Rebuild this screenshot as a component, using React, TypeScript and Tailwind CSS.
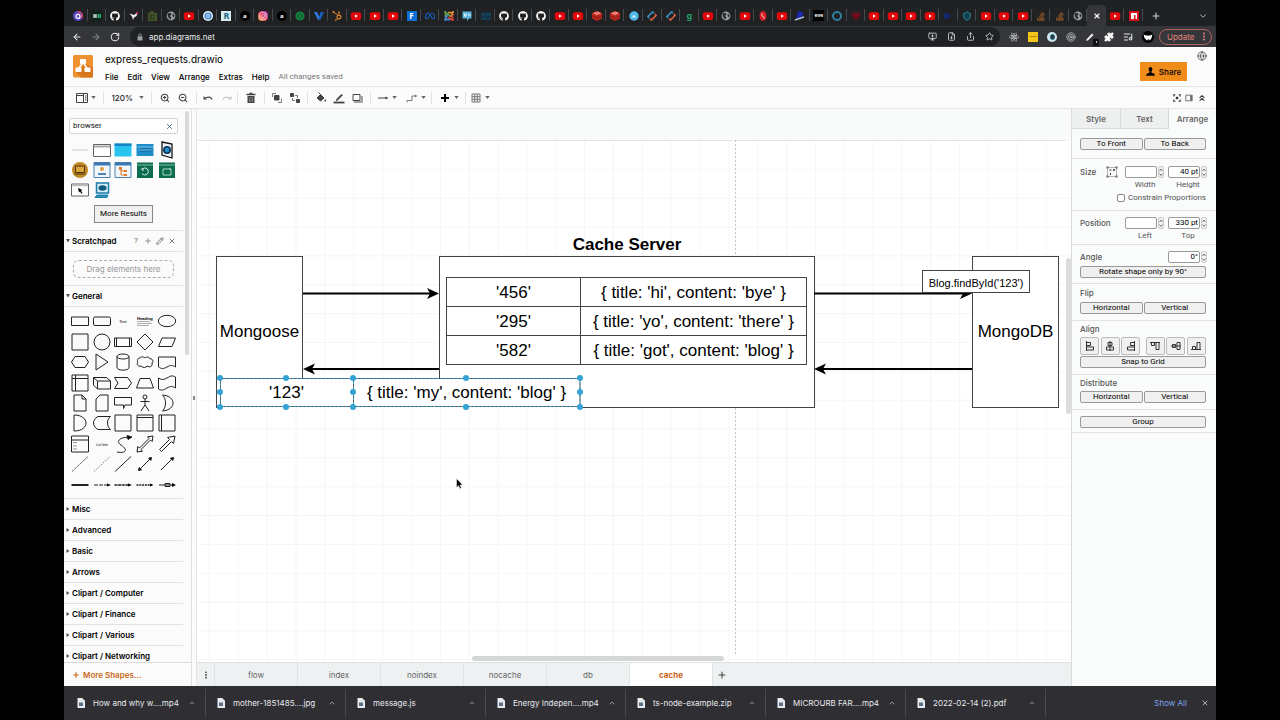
import type { ReactNode } from 'react';
import { FaGithub, FaHubspot, FaInstagram, FaMeta, FaReact, FaStackOverflow } from 'react-icons/fa6';
import {
  ArrowLeft, ArrowRight, ChevronDown, ChevronsUp, ChevronUp, FileDown, Globe, Heart, ListMusic, MonitorDown,
  Pencil, Plus, Puzzle, RotateCw, Share, Shield, Star, Target, X, ZoomIn, ZoomOut,
} from 'lucide-react';

const ui = "font-['Inter','Liberation_Sans',sans-serif]";
const small = "font-['Roboto','Liberation_Sans',sans-serif]";
const helv = "font-['Liberation_Sans',Arial,sans-serif]";

/* ---------- favicons ---------- */

function YouTube() {
  return (
    <svg viewBox="0 0 12 12" className="h-3 w-3">
      <rect x="0.8" y="2.2" width="10.4" height="7.8" rx="2" fill="#e3060b" />
      <path d="M5 4.5 8 6.1 5 7.7Z" fill="#fff" />
    </svg>
  );
}

function World() {
  return (
    <svg viewBox="0 0 12 12" className="h-3 w-3">
      <circle cx="6" cy="6" r="4.4" fill="#9aa0a6" />
      <path d="M3 3.2 6 3l.6 1.6L4.8 6l1.6 1.2L5.600 9.600 4 8.200 2.600 6ZM8 3.400l1.600 2L9 7.600 7.400 6Z" fill="#27292c" />
    </svg>
  );
}

function Redis() {
  return (
    <svg viewBox="0 0 12 12" className="h-3 w-3">
      <path d="m6 1 5 2.300v5.200L6 11 1 8.500V3.300Z" fill="#b5271f" />
      <path d="m6 1 5 2.300L6 5.600 1 3.300Z" fill="#dd3f35" />
      <path d="M1 5.800 6 8.200l5-2.400" fill="none" stroke="#7c1610" strokeWidth=".7" />
      <path d="M3.500 3.200h2M6.500 2.500l2 1M5.500 4.500l1-.5" stroke="#fff" strokeWidth=".9" />
    </svg>
  );
}

function Letter({ text, className }: { text: string; className: string }) {
  return <span className={`flex h-[10px] w-[10px] items-center justify-center leading-none font-bold ${className}`}>{text}</span>;
}

function Ring() {
  return (
    <svg viewBox="0 0 12 12" className="h-3 w-3" fill="none" strokeWidth="1.6">
      <path d="M3 8 2 6.500 6.500 2 8 3" stroke="#3d93c8" />
      <path d="m9 4 1 1.500L5.500 10 4 9" stroke="#e0614a" />
    </svg>
  );
}

const yt = <YouTube />;
const gh = <FaGithub className="h-[10px] w-[10px] text-white" />;

const tabs: { title: string; icon: ReactNode; active?: boolean }[] = [
  { title: 'Mail', icon: <svg viewBox="0 0 12 12" className="h-3 w-3"><circle cx="6" cy="6" r="5" fill="#5a49c8" /><path d="M6 3h3v6a4 4 0 0 0 2-3 5 5 0 0 0-5-5Z" fill="#d8405e" /><circle cx="6" cy="6.4" r="2" fill="none" stroke="#fff" strokeWidth="1.2" /></svg> },
  { title: 'Hired', icon: <svg viewBox="0 0 12 12" className="h-3 w-3"><rect x="1" y="1" width="10" height="10" rx="1" fill="#10201a" /><path d="M3 4v4M5 4v4M3 6h2" stroke="#e8f5ee" strokeWidth="1.2" /><path d="M7.4 4v4M9.2 4v4" stroke="#2bc07a" strokeWidth="1.3" /></svg> },
  { title: 'GitHub', icon: gh },
  { title: 'Bird', icon: <svg viewBox="0 0 12 12" className="h-3 w-3"><path d="M1.5 3.5 6 5l4-3-1.5 4L6 7.5 5 10 4 6.5Z" fill="#f3f0fa" /><path d="m8 2 2.5-.5L9 5Z" fill="#b9264f" /></svg> },
  { title: 'Notes', icon: <svg viewBox="0 0 12 12" className="h-3 w-3"><path d="M2 3h2V1.500h4V3h3v8H2Z" fill="#46592a" /><path d="M3 5h6M3 7h3M7 7h2M3 9h6" stroke="#1f2a12" /></svg> },
  { title: 'Page', icon: <World /> },
  { title: 'Video', icon: yt },
  { title: 'Docs', icon: <svg viewBox="0 0 12 12" className="h-3 w-3"><circle cx="6" cy="6" r="5" fill="#e5f0fb" /><circle cx="6" cy="6" r="3" fill="#8fb9e6" stroke="#3d83d0" strokeWidth="1.2" /></svg> },
  { title: 'Research', icon: <Letter text="R" className="bg-[#d9eef2] text-[9px] text-[#1a6b80]" /> },
  { title: 'A', icon: <Letter text="a" className="rounded-full bg-black text-[6px] text-white" /> },
  { title: 'Instagram', icon: <span className="flex h-[10px] w-[10px] items-center justify-center rounded-sm bg-linear-to-tr from-[#f9a13b] via-[#e0365f] to-[#a637c4]"><FaInstagram className="h-2 w-2 text-white" /></span> },
  { title: 'A', icon: <Letter text="a" className="rounded-full bg-black text-[6px] text-white" /> },
  { title: 'Green', icon: <svg viewBox="0 0 12 12" className="h-3 w-3"><circle cx="6" cy="6" r="4.6" fill="#15803f" /><circle cx="6" cy="6" r="2.2" fill="none" stroke="#0e5c2d" /></svg> },
  { title: 'V', icon: <svg viewBox="0 0 12 12" className="h-3 w-3"><path d="M1 2h3l2.5 6L5.5 10.500Z" fill="#2f7fe8" /><path d="M7.500 2H11L7 10.500 5.600 8Z" fill="#1b5cc0" /></svg> },
  { title: 'HubSpot', icon: <FaHubspot className="h-[10px] w-[10px] text-[#e28a2c]" /> },
  { title: 'Video', icon: yt }, { title: 'Video', icon: yt }, { title: 'Video', icon: yt },
  { title: 'F', icon: <Letter text="F" className="bg-[#0a6fd6] text-[8px] text-white" /> },
  { title: 'Meta', icon: <FaMeta className="h-[10px] w-[10px] text-[#1462c9]" /> },
  { title: 'Joomla', icon: <svg viewBox="0 0 12 12" className="h-3 w-3" fill="none" strokeWidth="1.600"><path d="M2.500 7V4.500l2-1L7 6" stroke="#6aa84f" /><path d="M5 2.500h2.500l2 2L7 7" stroke="#e8932f" /><path d="M9.500 5v3l-2 1.500L5 7" stroke="#d9453a" /><path d="M7 9.800H4.500l-2-2.300L5 5" stroke="#4a8fd0" /><circle cx="2.300" cy="2.300" r="1.200" fill="#6aa84f" /><circle cx="9.800" cy="2.300" r="1.200" fill="#e8932f" /><circle cx="2.300" cy="9.800" r="1.200" fill="#4a8fd0" /><circle cx="9.800" cy="9.800" r="1.200" fill="#d9453a" /></svg> },
  { title: 'Chat', icon: <svg viewBox="0 0 12 12" className="h-3 w-3"><path d="M1.500 1.500h9v7H8L6 11V8.500H1.500Z" fill="#5fb4dd" /><path d="m3 3.500 1.300 3 1.300-3M7 5h2.500" stroke="#fff" fill="none" /></svg> },
  { title: 'Photo', icon: <svg viewBox="0 0 12 12" className="h-3 w-3"><rect x="1" y="2.500" width="10" height="7.500" fill="#163c56" /><path d="m2 8.500 2.500-3L7 8l1.500-1.500 2 2" fill="none" stroke="#0d2434" /></svg> },
  { title: 'GitHub', icon: gh }, { title: 'GitHub', icon: gh }, { title: 'GitHub', icon: gh },
  { title: 'Video', icon: yt }, { title: 'Video', icon: yt },
  { title: 'Redis', icon: <Redis /> }, { title: 'Redis', icon: <Redis /> },
  { title: 'Blue', icon: <svg viewBox="0 0 12 12" className="h-3 w-3"><circle cx="6" cy="6" r="4.700" fill="#4db8e8" /><path d="m3.500 7.500 2.500-3 2.500 3Z" fill="#c9ebfa" /></svg> },
  { title: 'Sync', icon: <Ring /> }, { title: 'Sync', icon: <Ring /> },
  { title: 'G', icon: <Letter text="g" className="text-[9px] text-[#22a06b]" /> },
  { title: 'Video', icon: yt },
  { title: 'Page', icon: <World /> },
  { title: 'Video', icon: yt },
  { title: 'Red', icon: <svg viewBox="0 0 12 12" className="h-3 w-3"><ellipse cx="6" cy="6" rx="3.500" ry="5" fill="#d81c24" /><path d="M5 3v3l2 1v2" stroke="#f6b8b8" fill="none" /></svg> },
  { title: 'Video', icon: yt },
  { title: 'Plane', icon: <svg viewBox="0 0 12 12" className="h-3 w-3"><path d="m4 1 5 1v6L2 9Z" fill="#1c2aa8" /><path d="m1 10 9-3" stroke="#b8bcc4" strokeWidth="1.500" /></svg> },
  { title: 'Eve', icon: <span className="flex h-[11px] w-[11px] items-center justify-center bg-black text-[5px] font-bold text-white">eve</span> },
  { title: 'Circle', icon: <span className="h-[10px] w-[10px] rounded-full border-2 border-[#2f7f9f]" /> },
  { title: 'Heart', icon: <Heart className="h-[10px] w-[10px] fill-[#6a0f22] text-[#6a0f22]" /> },
  { title: 'Video', icon: yt }, { title: 'Video', icon: yt }, { title: 'Video', icon: yt }, { title: 'Video', icon: yt },
  { title: 'Flag', icon: <svg viewBox="0 0 12 12" className="h-3 w-3"><path d="m2 4 3-1 5 3-5 3-3-1Z" fill="#14286e" /></svg> },
  { title: 'Shield', icon: <Shield className="h-[10px] w-[10px] fill-[#12414d] text-[#2c93ad]" /> },
  { title: 'Video', icon: yt }, { title: 'Video', icon: yt }, { title: 'Video', icon: yt },
  { title: 'Stack Overflow', icon: <FaStackOverflow className="h-[10px] w-[10px] text-[#a8642a]" /> },
  { title: 'Stack Overflow', icon: <FaStackOverflow className="h-[10px] w-[10px] text-[#a8642a]" /> },
  { title: 'Page', icon: <World /> },
  { title: 'Close tab', icon: <X className="h-2 w-2 stroke-[3.5] text-white" />, active: true },
  { title: 'Video', icon: yt },
  { title: 'npm', icon: <svg viewBox="0 0 12 12" className="h-3 w-3"><rect x="1" y="1" width="10" height="10" fill="#d5111c" /><path d="M3 3h6v6H7.500V5H6v4H3Z" fill="#fff" /></svg> },
];

function BrowserChrome() {
  return (
    <div className="shrink-0 bg-[#1f2123]">
      <div className="flex h-[26px] items-end pl-[5px]">
        <div className="flex h-[21px] min-w-0 flex-1">
          {tabs.map((tab, i) => (
            <button
              key={i}
              aria-label={tab.title}
              className={`relative flex min-w-0 flex-1 items-center justify-center ${tab.active ? 'rounded-t bg-[#35363a]' : ''}`}
            >
              {tab.icon}
              {!tab.active && <span className="absolute top-1 right-0 h-3 w-px bg-[#45484c]" />}
            </button>
          ))}
        </div>
        <div className="flex h-[21px] w-[73px] items-center justify-between px-2 text-[#d0d3d6]">
          <button aria-label="New tab"><Plus className="h-[10px] w-[10px] stroke-[2.500]" /></button>
          <button aria-label="Search tabs"><ChevronDown className="h-[10px] w-[10px]" /></button>
        </div>
      </div>
      <div className="flex h-[21px] items-center bg-[#35363a] pl-2 text-[#e2e4e7]">
        <div className="flex w-[58px] items-center gap-[9px]">
          <button aria-label="Back"><ArrowLeft className="h-[10px] w-[10px] stroke-[2.500]" /></button>
          <button aria-label="Forward"><ArrowRight className="h-[10px] w-[10px] stroke-[2.500] text-[#85888c]" /></button>
          <button aria-label="Reload"><RotateCw className="h-[10px] w-[10px] stroke-[2.500]" /></button>
        </div>
        <div className="flex h-[19px] min-w-0 flex-1 items-center rounded-full bg-[#1f2123] pr-[6px] pl-[6px]">
          <svg viewBox="0 0 8 8" className="h-2 w-2" fill="#9a9da1"><rect x="1.500" y="3.300" width="5" height="4.200" rx=".6" /><path d="M2.700 3.500V2.300a1.300 1.300 0 0 1 2.600 0v1.200" fill="none" stroke="#9a9da1" strokeWidth=".9" /></svg>
          <input aria-label="Address" defaultValue="app.diagrams.net" className={`ml-[5px] min-w-0 flex-1 bg-transparent text-[8px] text-[#e8eaed] outline-none ${ui}`} />
          <div className="flex gap-[10px]">
            <MonitorDown className="h-[9px] w-[9px]" />
            <FileDown className="h-[9px] w-[9px]" />
            <Share className="h-[9px] w-[9px]" />
            <Star className="h-[9px] w-[9px]" />
          </div>
        </div>
        <div className="flex items-center gap-[9px] pr-1 pl-[9px]">
          <FaReact className="h-[10px] w-[10px]" />
          <span className="flex h-[10px] w-[10px] items-center justify-center bg-[#f5c518]"><span className="h-px w-[7px] bg-[#a8830a]" /></span>
          <span className="flex h-[10px] w-[10px] items-center justify-center rounded-full bg-[#cfe8ef]"><span className="h-[6px] w-[5px] rounded-full border border-[#1d6f88] bg-[#35363a]" /></span>
          <Target className="h-[10px] w-[10px] text-[#b9bcc0]" />
          <span className="relative">
            <svg viewBox="0 0 10 10" className="h-[10px] w-[10px]"><path d="m1 9 .8-2L7 1.500 8.500 3 3.200 8.200Z" fill="#f1f1f1" /></svg>
            <span className="absolute -right-1 -bottom-1 flex h-[7px] w-[6px] items-center justify-center bg-[#111]"><span className="h-[2px] w-px bg-[#bbb]" /></span>
          </span>
          <Puzzle className="h-[10px] w-[10px] fill-white text-white" />
          <ListMusic className="h-[10px] w-[10px] stroke-[2.500]" />
          <svg viewBox="0 0 12 12" className="h-3 w-3">
            <circle cx="6" cy="6" r="6" fill="#000" />
            <path d="M1.500 3.500 4 4.500h4l2.500-1L9.500 7 8 9.500 6.500 8 5 9.500 2.500 7Z" fill="#fff" />
          </svg>
          <button className={`-ml-1 flex h-4 w-[53px] items-center justify-between rounded-full border border-[#b3655f] pr-[6px] pl-[7px] text-[8px] text-[#e2837b] ${ui}`}>
            Update
            <svg viewBox="0 0 2 9" className="h-[9px] w-[2px]" fill="currentColor"><circle cx="1" cy="1.500" r="1" /><circle cx="1" cy="4.500" r="1" /><circle cx="1" cy="7.500" r="1" /></svg>
          </button>
        </div>
      </div>
    </div>
  );
}

/* ---------- header and toolbar ---------- */

function Header() {
  return (
    <header className="flex h-[39px] shrink-0 items-start bg-[#fbfbfb] pl-[9px]">
      <svg viewBox="0 0 20 23" className="mt-2 h-[23px] w-5">
        <rect width="20" height="22.500" rx="1.500" fill="#ee9130" />
        <path d="M20 13v8.500a1 1 0 0 1-1 1H8L3 17l10-8Z" fill="#d9771f" />
        <path d="m9.500 8-4 6m5-6 4 6" stroke="#fff" strokeWidth="1.500" />
        <rect x="7" y="4" width="6" height="5" rx="0.800" fill="#fff" />
        <rect x="2.500" y="12.500" width="6" height="4.500" rx="0.800" fill="#fff" />
        <rect x="11.500" y="12.500" width="6" height="4.500" rx="0.800" fill="#fff" />
      </svg>
      <div className="mt-[5px] ml-3 flex-1">
        <h1 className={`text-[10px] leading-[15px] text-black ${ui}`}>express_requests.drawio</h1>
        <nav className={`mt-1 flex gap-[9px] text-[8px] leading-3 font-medium text-black ${ui}`}>
          {['File', 'Edit', 'View', 'Arrange', 'Extras', 'Help'].map((item) => (
            <button key={item}>{item}</button>
          ))}
          <span className={`text-[8px] font-normal text-[#777] ${small}`}>All changes saved</span>
        </nav>
      </div>
      <button className={`mt-[15px] flex h-[19px] w-[47px] items-center justify-center gap-1 bg-[#f08c1a] text-[8px] font-semibold text-black/90 ${ui}`}>
        <svg viewBox="0 0 10 10" className="h-[9px] w-[9px] text-black" fill="currentColor">
          <path d="M5 0C3.600 0 2.800 1.200 3 2.700c.1 1 .6 1.900 1 2.300v1L1 7.500Q.2 8 .2 9.800h9.600Q9.800 8 9 7.500L6 6V5c.4-.4.9-1.300 1-2.300C7.200 1.200 6.400 0 5 0Z" />
        </svg>
        Share
      </button>
      <button aria-label="Language" className="mt-1 mr-[9px] ml-[10px]"><Globe className="h-[10px] w-[10px] text-[#555]" /></button>
    </header>
  );
}

function Caret() {
  return <svg viewBox="0 0 6 4" className="h-[3px] w-[5px]" fill="#666"><path d="M0 0h6L3 4Z" /></svg>;
}

function ToolGroup({ className, children }: { className: string; children: ReactNode }) {
  return <div className={`flex h-3 items-center justify-center border-r border-[#e2e2e2] ${className}`}>{children}</div>;
}

function Tool({ label, children }: { label: string; children: ReactNode }) {
  return <button aria-label={label} className="flex items-center gap-[3px] text-[#444]">{children}</button>;
}

function Svg({ children }: { children: ReactNode }) {
  return <svg viewBox="0 0 12 12" className="h-3 w-3" fill="none" stroke="currentColor">{children}</svg>;
}

function Toolbar() {
  return (
    <div className="flex h-[23px] shrink-0 items-center border-y border-[#e4e4e4] bg-[#fbfbfb]">
      <ToolGroup className="w-10 pl-1">
        <Tool label="Format view">
          <Svg><path d="M.5 1.500h11v9H.5ZM7.500 1.500v9M.5 3.500h7M9 4h1.500M9 6h1.500M9 8h1.500" /></Svg>
          <Caret />
        </Tool>
      </ToolGroup>
      <ToolGroup className="w-12 gap-[5px]">
        <select aria-label="Zoom" className={`appearance-none bg-transparent text-[8px] font-medium text-[#222] outline-none ${ui}`}>
          <option>120%</option>
        </select>
        <Caret />
      </ToolGroup>
      <ToolGroup className="w-[45px] gap-2">
        <Tool label="Zoom in"><ZoomIn className="h-[10px] w-[10px] stroke-[2.500]" /></Tool>
        <Tool label="Zoom out"><ZoomOut className="h-[10px] w-[10px] stroke-[2.500]" /></Tool>
      </ToolGroup>
      <ToolGroup className="w-[41px] gap-[7px]">
        <Tool label="Undo"><Svg><path d="M3 6.500c2-2 6-2 7 1" strokeWidth="1.200" /><path d="M1.500 4v3.500H5Z" fill="currentColor" stroke="none" /></Svg></Tool>
        <Tool label="Redo"><span className="text-[#c4c4c4]"><Svg><path d="M9 6.500c-2-2-6-2-7 1" strokeWidth="1.200" /><path d="M10.500 4v3.500H7Z" fill="currentColor" stroke="none" /></Svg></span></Tool>
      </ToolGroup>
      <ToolGroup className="w-[27px]">
        <Tool label="Delete"><Svg><path d="M2.500 4h7v7h-7Z" fill="currentColor" stroke="none" /><path d="M1.500 2.500h9M4.500 1.500h3" strokeWidth="1.300" /><path d="M4.500 5v5M6 5v5M7.500 5v5" stroke="#aaa" strokeWidth=".5" /></Svg></Tool>
      </ToolGroup>
      <ToolGroup className="w-[43px] gap-[6px]">
        <Tool label="To front"><Svg><path d="M3.500 3.500h4.500v4.500h-4.500Z" fill="currentColor" /><path d="M1.500 5V1.500H5M7 10.500h3.500V7" stroke="#777" /></Svg></Tool>
        <Tool label="To back"><Svg><path d="M1.500 1.500h3v3h-3ZM7.500 7.500h3v3h-3Z" fill="currentColor" /><path d="M6 3.500h2.500V6M3.500 6v2.500H6" stroke="#777" /></Svg></Tool>
      </ToolGroup>
      <ToolGroup className="w-[63px] gap-[6px]">
        <Tool label="Fill colour"><Svg><path d="m5.500 2.500 3.500 3.500-3.500 3L2 6Z" fill="currentColor" /><path d="M3.500.5 6 3" /><circle cx="10.300" cy="8.500" r=".9" fill="currentColor" stroke="none" /></Svg></Tool>
        <Tool label="Line colour"><Svg><path d="M3 7.500 8.500 2l1.300 1.300-5.500 5.500H3Z" fill="currentColor" stroke="none" /><path d="M.5 10.500h11" strokeWidth="1.800" /></Svg></Tool>
        <Tool label="Shadow"><Svg><path d="M2 2.500h7v6H2Z" /><path d="M3 10h8V4" strokeWidth="1.500" stroke="#888" /></Svg></Tool>
      </ToolGroup>
      <ToolGroup className="w-[61px] gap-[9px]">
        <Tool label="Connection"><Svg><path d="M1 6h8" /><path d="M8.500 4.500v3l3-1.500Z" fill="currentColor" stroke="none" /></Svg><Caret /></Tool>
        <Tool label="Waypoints"><Svg><path d="M1 10.500V8.500h5V4h4" stroke="#777" /><path d="M9 2.500v3l2.500-1.500Z" fill="#777" stroke="none" /></Svg><Caret /></Tool>
      </ToolGroup>
      <ToolGroup className="w-[34px]">
        <Tool label="Insert"><Svg><path d="M6 2v8M2 6h8" strokeWidth="2" stroke="#000" /></Svg><Caret /></Tool>
      </ToolGroup>
      <div className="flex flex-1 items-center pl-1">
        <Tool label="Table"><Svg><path d="M2 2h8v8H2ZM2 4.700h8M2 7.300h8M4.700 2v8M7.300 2v8" stroke="#777" /></Svg><Caret /></Tool>
      </div>
      <div className="flex items-center gap-1 pr-[9px]">
        <Tool label="Fullscreen"><svg viewBox="0 0 10 10" className="h-2 w-2" fill="none" stroke="#333" strokeWidth="1.400"><path d="M1 3V1h2M7 1h2v2M9 7v2H7M3 9H1V7" /><rect x="4.200" y="4.200" width="1.600" height="1.600" fill="#333" /></svg></Tool>
        <Tool label="Format"><svg viewBox="0 0 10 10" className="h-2 w-2" fill="none" stroke="#555"><path d="M1 1.500h8v7H1Z" /><path d="M7.500 2v6" strokeWidth="2" /></svg></Tool>
        <Tool label="Collapse"><ChevronsUp className="h-[10px] w-[10px] stroke-[2.500] text-[#333]" /></Tool>
      </div>
    </div>
  );
}

/* ---------- sidebar ---------- */

const searchResults: { name: string; art: ReactNode }[] = [
  { name: 'Line', art: <path d="M2 10h16" stroke="#ccc" /> },
  { name: 'Window', art: <><path d="M1.500 4.500h17v12h-17Z" fill="#fff" stroke="#666" /><path d="M2 6.500h16" stroke="#aaa" strokeWidth="2" /></> },
  { name: 'Blue window', art: <><path d="M1.500 3.500h17v13h-17Z" fill="#28c4ee" /><path d="M1.500 3.500h17v2.500h-17Z" fill="#1683c4" /></> },
  { name: 'Service', art: <><path d="M1.500 4h17v12h-17Z" fill="#1f8dc9" /><path d="M5 8h11v4H5Z" fill="#1272ab" /><path d="M2 7h16M4 10h12" stroke="#8fd0ee" strokeWidth=".8" /></> },
  { name: 'Server', art: <><path d="m5 2 10 2v14L5 15Z" fill="#eef2fa" stroke="#111" strokeWidth="1.300" /><circle cx="10" cy="10" r="3.200" fill="#1f8dc9" stroke="#0a2f55" strokeWidth="1.500" /></> },
  { name: 'Client', art: <><circle cx="10" cy="10" r="8" fill="#bf8a24" /><path d="M5.500 6h9v6.500h-9Z" fill="#dfa63c" stroke="#4e3610" /><path d="M4.500 14h11" stroke="#4e3610" /></> },
  { name: 'Page', art: <><path d="M2 2.500h16v15H2Z" fill="#f1f6fb" stroke="#4d83b5" /><path d="M2 2.500h16v3H2Z" fill="#3c78b0" /><circle cx="10" cy="9" r="2" fill="#e39a44" /><path d="M6 14h8" stroke="#4d83b5" strokeWidth="2" /></> },
  { name: 'Sitemap', art: <><path d="M2 2.500h16v15H2Z" fill="#f1f6fb" stroke="#4d83b5" /><path d="M2 2.500h16v3H2Z" fill="#3c78b0" /><path d="M6 7h3v3H6ZM11 10h3v2h-3ZM11 14h3v2h-3Z" fill="#e07b2e" /><path d="M8 10v5h3M8 11h3" stroke="#e07b2e" /></> },
  { name: 'Refresh', art: <><path d="M2 2.500h16v15.500H2Z" fill="#0d6b4f" /><path d="M2 5h16" stroke="#7fc4a9" /><path d="M7 9.500a3.500 3.500 0 1 1 0 4M7 8v2h2" stroke="#d3efe2" /></> },
  { name: 'Frame', art: <><path d="M2 2.500h16v15.500H2Z" fill="#0d6b4f" /><path d="M2 5h16" stroke="#7fc4a9" /><path d="M6 9h8v6H6ZM12 8l2 2" stroke="#a5dcc3" /></> },
  { name: 'Cursor', art: <><path d="M1.500 4h17v12h-17Z" fill="#fff" stroke="#666" /><path d="M2 5.500h16" stroke="#bbb" strokeWidth="1.500" /><path d="m8 8 4.500 2-1.500.8 1.500 2.200-1 .7-1.500-2.200L9 12.500Z" fill="#000" /></> },
  { name: 'Monitor', art: <><path d="M4.500 3h12v10h-12Z" fill="#d6ecf5" stroke="#1d7da9" strokeWidth="1.500" /><ellipse cx="10.500" cy="8" rx="4" ry="2.800" fill="#0f5c80" /><path d="M5 15h11l-1 2.500H3Z" fill="#2b94c1" stroke="#1d7da9" /></> },
];

const shapes: { name: string; art: ReactNode }[] = [
  { name: 'Rectangle', art: <path d="M1.500 6h17v8.500h-17Z" /> },
  { name: 'Rounded rectangle', art: <rect x="1.500" y="6" width="17" height="8.500" rx="1.500" /> },
  { name: 'Text', art: <text x="10" y="12" textAnchor="middle" fontSize="4" fill="#000" stroke="none">Text</text> },
  { name: 'Textbox', art: <><text x="2" y="8.500" fontSize="4" fontWeight="bold" fill="#000" stroke="none">Heading</text><path d="M2 10.500h13M2 12.500h15M2 14.500h12" stroke="#999" strokeWidth=".8" /></> },
  { name: 'Ellipse', art: <ellipse cx="10" cy="10" rx="8.700" ry="5.700" /> },
  { name: 'Square', art: <path d="M2 2h16v16H2Z" /> },
  { name: 'Circle', art: <circle cx="10" cy="10" r="8" /> },
  { name: 'Process', art: <path d="M1.500 6h17v8.500h-17ZM3.500 6v8.500M16.500 6v8.500" /> },
  { name: 'Diamond', art: <path d="m10 2 8 8-8 8-8-8Z" /> },
  { name: 'Parallelogram', art: <path d="M5 6h13.500L15 14.500H1.500Z" /> },
  { name: 'Hexagon', art: <path d="M5 4.500h10l3.500 5.500-3.500 5.500H5L1.500 10Z" /> },
  { name: 'Triangle', art: <path d="m4 2 12 8-12 8Z" /> },
  { name: 'Cylinder', art: <><ellipse cx="10" cy="4.500" rx="6" ry="2.500" /><path d="M4 4.500v11c0 3.500 12 3.500 12 0v-11" /></> },
  { name: 'Cloud', art: <path d="M5 6c-3 0-3 3-2 4-2 2 0 5 3 4 2 2 5 2 6 0 3 2 6 0 5-3 2-2 0-5-2-4-1-3-4-2-5-1-2-2-5-1-5 0Z" /> },
  { name: 'Document', art: <path d="M1.500 5h17v10c-3-2-5-2-8.500 0s-5.500 2-8.500 0Z" /> },
  { name: 'Internal storage', art: <path d="M2 2h16v16H2ZM2 5.500h16M5.500 2v16" /> },
  { name: 'Cube', art: <path d="M1.500 4.500h13l4 3.500v8h-13l-4-4ZM1.500 4.500l4 3.500h13M5.500 8v8" /> },
  { name: 'Step', art: <path d="M1.500 4.500h13L18.500 10l-4 5.500h-13L5 10Z" /> },
  { name: 'Trapezoid', art: <path d="M5 5.500h10l3.500 9.500h-17Z" /> },
  { name: 'Tape', art: <path d="M1.500 5c3 2 5 2 8.500 0s5-3 8.500-1v11c-3-2-5-2-8.500 0s-5 3-8.500 1Z" /> },
  { name: 'Note', art: <path d="M4 2h8l4 4v12H4ZM12 2v4h4" /> },
  { name: 'Card', art: <path d="M8 2h8v16H4V6Z" /> },
  { name: 'Callout', art: <path d="M1.500 4.500h17v7.500H12l-1.500 3.500V12h-9Z" /> },
  { name: 'Actor', art: <><circle cx="10" cy="4" r="2" /><path d="M10 6v6M5.500 8.500h9M10 12l-4 6M10 12l4 6" /></> },
  { name: 'Or', art: <path d="M5.500 2c14 1 14 15 0 16 4-4 4-12 0-16Z" /> },
  { name: 'And', art: <path d="M4 2c16 0 16 16 0 16Z" /> },
  { name: 'Data storage', art: <path d="M6 3.500h12.500c-4 3-4 10 0 13H6c-6-3-6-10 0-13Z" /> },
  { name: 'Container', art: <path d="M2 2h16v16H2Z" /> },
  { name: 'Titled container', art: <path d="M2 2h16v16H2ZM2 4.500h16" /> },
  { name: 'Side container', art: <path d="M2 2h16v16H2ZM4.500 2v16" /> },
  { name: 'List', art: <><path d="M1.500 2h17v16h-17ZM1.500 6h17" /><path d="M3 8.500h4M3 12h4M3 15h4" stroke="#999" /></> },
  { name: 'List item', art: <text x="10" y="11.500" textAnchor="middle" fontSize="3" fill="#000" stroke="none">List Item</text> },
  { name: 'Curve', art: <><path d="M4 18c12 2 9-4 4-7S6 3 15 3.500" /><path d="m14 1.500 5 1.500-4 2.500Z" fill="#000" /></> },
  { name: 'Bidirectional arrow', art: <path d="m2 18 .8-5.500 1.600 1.600 9.700-9.700L12.500 2.800 18 2l-.8 5.500-1.600-1.600-9.700 9.700 1.600 1.600Z" /> },
  { name: 'Arrow', art: <path d="m2.500 15.500 10-10-2-2L18 2l-1.500 7.500-2-2-10 10Z" /> },
  { name: 'Dashed line', art: <path d="M2 17.500 18 2.500" strokeDasharray="1.500 .6" strokeWidth=".8" /> },
  { name: 'Dotted line', art: <path d="M2 17.500 18 2.500" strokeDasharray="1 1.500" strokeWidth=".8" /> },
  { name: 'Plain line', art: <path d="M2 17.500 18 2.500" /> },
  { name: 'Two way connector', art: <><path d="m4 16 12-12" /><path d="m3.500 16.500.7-3 2.300 2.300ZM16.500 3.500l-.7 3-2.300-2.300Z" fill="#000" /></> },
  { name: 'Connector', art: <><path d="m4 16 12-12" /><path d="m16.500 3.500-.7 3-2.300-2.300Z" fill="#000" /></> },
  { name: 'Link', art: <path d="M1.500 10h17" strokeWidth="2" /> },
  { name: 'Labelled link', art: <><path d="M2 10h14" strokeDasharray="4 1" /><path d="m15 8.500 4 1.500-4 1.500Z" fill="#000" stroke="none" /></> },
  { name: 'Source label', art: <><path d="M1.500 10h15" strokeWidth="1.400" strokeDasharray="3 .6" /><path d="m15 8.500 4 1.500-4 1.500Z" fill="#000" stroke="none" /></> },
  { name: 'Two labels', art: <><path d="M1.500 10h16" strokeWidth="1.300" strokeDasharray="2 .8" /><path d="m15 8.500 3 1.500-3 1.500Z" fill="#000" stroke="none" /></> },
  { name: 'Message link', art: <><path d="M2 10h14M8 8.500h5v3H8Z" /><path d="m15 8 4 2-4 2Z" fill="#000" stroke="none" /></> },
];

function Section({ title, open, children }: { title: string; open?: boolean; children?: ReactNode }) {
  return (
    <div className="flex h-[21px] items-center border-b border-[#e2e2e2] pl-[2px]">
      <button className={`flex flex-1 items-center gap-[2px] text-[8px] font-semibold text-black ${ui}`}>
        <svg viewBox="0 0 4 4" className="h-1 w-1" fill="#555">
          {open ? <path d="M0 0h4L2 3.500Z" /> : <path d="M.5 0v4L3.500 2Z" />}
        </svg>
        {title}
      </button>
      {children}
    </div>
  );
}

function Sidebar() {
  return (
    <aside className="flex w-[128px] shrink-0 flex-col border-r border-[#e0e0e0] bg-[#fbfbfb]">
      <div className="relative min-h-0 flex-1 overflow-hidden pr-2">
        <div className="border-b border-[#e2e2e2] px-[5px] pt-[9px] pb-[7px]">
          <div className="flex h-4 items-center rounded-xs border border-[#d5d5d5] bg-white px-[3px]">
            <input aria-label="Search shapes" defaultValue="browser" className={`min-w-0 flex-1 text-[8px] text-[#111] outline-none ${small}`} />
            <button aria-label="Clear"><X className="h-[9px] w-[9px] text-[#3a4f8f]" /></button>
          </div>
          <div className="mt-[6px] grid grid-cols-5 justify-items-center">
            {searchResults.map((s) => (
              <button key={s.name} aria-label={s.name} className="h-5 w-5">
                <svg viewBox="0 0 20 20" className="h-5 w-5" fill="none">{s.art}</svg>
              </button>
            ))}
          </div>
          <button className={`mx-auto mt-[5px] block h-[18px] w-[59px] border border-[#888] bg-[#f0f0f0] text-[8px] leading-4 text-black ${small}`}>More Results</button>
        </div>
        <Section title="Scratchpad" open>
          <div className="flex items-center gap-1 pr-[7px] text-[#666]">
            <button aria-label="Help" className={`w-2 text-[8px] ${small}`}>?</button>
            <button aria-label="Add"><Plus className="h-2 w-2" /></button>
            <button aria-label="Edit"><Pencil className="h-2 w-2 stroke-[2.500]" /></button>
            <button aria-label="Close"><X className="h-2 w-2 stroke-[2.500]" /></button>
          </div>
        </Section>
        <div className="border-b border-[#e2e2e2] px-[9px] pt-2 pb-[7px]">
          <div className={`flex h-[18px] items-center justify-center rounded-md border border-dashed border-[#aaa] text-[8px] text-[#999] ${ui}`}>Drag elements here</div>
        </div>
        <Section title="General" open />
        <div className="border-b border-[#e2e2e2] px-[5px] pt-1 pb-[3px]">
          <div className="grid h-[184px] grid-cols-5 grid-rows-9 place-items-center">
            {shapes.map((s) => (
              <button key={s.name} aria-label={s.name} className="h-5 w-5">
                <svg viewBox="0 0 20 20" className={`h-5 w-5 ${helv}`} fill="none" stroke="#222">{s.art}</svg>
              </button>
            ))}
          </div>
        </div>
        {['Misc', 'Advanced', 'Basic', 'Arrows', 'Clipart / Computer', 'Clipart / Finance', 'Clipart / Various', 'Clipart / Networking'].map((t) => (
          <Section key={t} title={t} />
        ))}
        <div className="absolute top-[2px] right-[2px] h-[244px] w-1 rounded-full bg-[#d9d9d9]" />
      </div>
      <button className={`flex h-6 shrink-0 items-center gap-[3px] border-t border-[#ddd] pl-2 text-[8px] font-semibold text-[#cc6a1c] ${ui}`}>
        <Plus className="h-2 w-2 stroke-[3.500]" />
        More Shapes...
      </button>
    </aside>
  );
}

/* ---------- canvas ---------- */

const cacheRows = [
  ["'456'", "{ title: 'hi', content: 'bye' }"],
  ["'295'", "{ title: 'yo', content: 'there' }"],
  ["'582'", "{ title: 'got', content: 'blog' }"],
];

const node = 'absolute flex items-center justify-center border border-[#444] bg-white text-[17px] whitespace-nowrap text-black';

const handles = [
  [220, 378], [286, 378], [353, 378], [466, 378], [580, 378],
  [220, 392], [353, 392], [580, 392],
  [220, 407], [286, 407], [353, 407], [466, 407], [580, 407],
];

function Connector({ from, to, y }: { from: number; to: number; y: number }) {
  const dir = to > from ? 1 : -1;
  return (
    <g>
      <path d={`M${from} ${y}H${to - dir * 6}`} stroke="#000" strokeWidth="2" />
      <path d={`M${to} ${y}l${-dir * 12} -5.500l${dir * 3} 5.500l${-dir * 3} 5.500Z`} fill="#000" />
    </g>
  );
}

function Canvas() {
  return (
    <div className={`relative min-h-0 flex-1 overflow-hidden bg-white ${helv}`}>
      <svg className="absolute inset-0 h-full w-full">
        <defs>
          <pattern id="grid" x="12" y="31" width="28.850" height="28.850" patternUnits="userSpaceOnUse">
            <path d="M0 .5H28.850M.5 0V28.850" stroke="#f5f5f5" fill="none" />
          </pattern>
        </defs>
        <rect width="100%" height="100%" fill="url(#grid)" />
        <rect width="100%" height="31" fill="#f9fafa" />
        <path d="M0 31.500H868" stroke="#e3e5e5" />
        <path d="M538.500 31V546" stroke="#c4c4c4" strokeDasharray="2 2" />
      </svg>

      <div className={`${node} top-[147px] left-[19px] h-[152px] w-[87px]`}>Mongoose</div>
      <div className={`${node} top-[147px] left-[242px] h-[152px] w-[376px]`} />
      <div className={`${node} top-[147px] left-[775px] h-[152px] w-[87px]`}>MongoDB</div>
      <div className="absolute top-[126px] left-[242px] w-[376px] text-center text-[17px] leading-5 font-bold text-black">Cache Server</div>

      <table className="absolute top-[168px] left-[249px] h-[88px] w-[361px] table-fixed border-collapse text-center text-[17px] leading-5 whitespace-nowrap text-black">
        <tbody>
          {cacheRows.map(([id, value]) => (
            <tr key={id}>
              <td className="w-[134px] border border-[#444] px-0 pt-[2px] pb-0">{id}</td>
              <td className="border border-[#444] px-0 pt-[2px] pb-0">{value}</td>
            </tr>
          ))}
        </tbody>
      </table>

      <svg viewBox="197 109 868 548" className="absolute top-0 left-0 h-[548px] w-[868px]">
        <Connector from={303} to={439} y={293.5} />
        <Connector from={439} to={303} y={369} />
        <Connector from={814} to={972} y={293.5} />
        <Connector from={972} to={814} y={369} />
      </svg>

      <div className={`${node} top-[161px] left-[725px] h-[23px] w-[108px]`}>
        <span className="pt-[3px] text-[11px] leading-none">Blog.findById('123')</span>
      </div>
      <div className="absolute top-[269px] left-[23px] flex h-[30px] w-[360px] bg-white text-[17px] text-black">
        <div className="flex w-[133px] items-center justify-center">'123'</div>
        <div className="flex flex-1 items-center justify-center whitespace-nowrap">{"{ title: 'my', content: 'blog' }"}</div>
      </div>

      <svg viewBox="197 109 868 548" className="absolute top-0 left-0 h-[548px] w-[868px]">
        <path d="M220.500 378.500H580V406.500H220.500ZM353.500 378V407" fill="none" stroke="#555" />
        <path d="M220.500 378.500H580V406.500H220.500ZM353.500 378V407" fill="none" stroke="#29a3dc" strokeDasharray="2 2" />
        {handles.map(([x, y]) => (
          <circle key={`${x}-${y}`} cx={x} cy={y} r="3" fill="#35a2d4" />
        ))}
        <path d="M456.500 478.500v9l2-1.800 1.400 3 1.500-.7-1.400-2.900h2.700Z" fill="#000" stroke="#fff" strokeWidth=".5" />
      </svg>

      <div className="absolute top-[149px] right-0 h-[156px] w-[5px] rounded-full bg-[#dcdddd]" />
      <div className="absolute bottom-[1px] left-[275px] h-[5px] w-[252px] rounded-full bg-[#d5d6d6]" />
    </div>
  );
}

function PageTabs() {
  return (
    <div className={`flex h-6 shrink-0 items-stretch border-t border-[#dfe2e2] bg-[#eef1f1] text-[8px] text-[#666] ${ui}`}>
      <button aria-label="Pages" className="flex w-[18px] items-center justify-center border-r border-[#e0e3e3]">
        <svg viewBox="0 0 2 9" className="h-2 w-[2px]" fill="#444"><circle cx="1" cy="1.500" r="1" /><circle cx="1" cy="4.500" r="1" /><circle cx="1" cy="7.500" r="1" /></svg>
      </button>
      {['flow', 'index', 'noindex', 'nocache', 'db', 'cache'].map((t) => (
        <button key={t} className={`w-[83px] border-r border-[#e0e3e3] ${t === 'cache' ? 'bg-white font-bold text-[#cc5f14]' : ''}`}>{t}</button>
      ))}
      <button aria-label="Insert page" className="px-1"><Plus className="h-[10px] w-[10px] stroke-[2.500] text-[#444]" /></button>
    </div>
  );
}

/* ---------- format panel ---------- */

function Btn({ children }: { children: ReactNode }) {
  return <button className={`h-3 flex-1 rounded-xs border border-[#999] bg-[#f0f0f0] text-[8px] leading-[10px] text-black ${small}`}>{children}</button>;
}

function NumField({ label, value, caption }: { label: string; value: string; caption?: boolean }) {
  return (
    <label className={`flex w-[38px] flex-col text-[8px] leading-[10px] text-[#555] ${small}`}>
      <span className="flex h-3 gap-px">
        <input aria-label={label} defaultValue={value} className={`w-8 rounded-xs border border-[#999] bg-white px-px text-right text-[8px] text-black outline-none ${small}`} />
        <span className="flex flex-1 flex-col items-center justify-between rounded-xs border border-[#ccc] bg-[#f3f3f3] py-px">
          <svg viewBox="0 0 4 8" className="h-2 w-1" fill="none" stroke="#555" strokeWidth=".8"><path d="m.5 3 1.500-2 1.500 2M.5 5.500 2 7.500l1.500-2" /></svg>
        </span>
      </span>
      {caption && <span className="mt-[2px] w-10 text-center">{label}</span>}
    </label>
  );
}

function Label({ children }: { children: ReactNode }) {
  return <span className={`block text-[8px] leading-3 font-medium text-[#555] ${ui}`}>{children}</span>;
}

const alignIcons = [
  { name: 'Left', art: <path d="M2.500 1v10M2.500 2.500h4v3h-4M2.500 7h7v3h-7" /> },
  { name: 'Centre', art: <path d="M6 1v10M4 2.500h4v3H4ZM2.500 7h7v3h-7Z" /> },
  { name: 'Right', art: <path d="M9.500 1v10M9.500 2.500h-4v3h4M9.500 7h-7v3h7" /> },
  { name: 'Top', art: <path d="M1 2.500h10M2.500 2.500v3h3v-3M7 2.500v7h3v-7" /> },
  { name: 'Middle', art: <path d="M1 6h10M2.500 4.500h3v3h-3ZM7 2.500h3v7H7Z" /> },
  { name: 'Bottom', art: <path d="M1 9.500h10M2.500 9.500v-3h3v3M7 9.500v-7h3v7" /> },
];

function FormatPanel() {
  const block = 'border-b border-[#e2e2e2] pl-2 pr-[10px]';
  return (
    <aside className={`w-[145px] shrink-0 overflow-hidden border-l border-[#dcdcdc] bg-[#fafbfb] ${ui}`}>
      <div className="flex h-5 text-[8px] font-semibold text-[#666]">
        <button className="w-[49px] border-r border-b border-[#d8dada] bg-[#eef0f0]">Style</button>
        <button className="w-[48px] border-r border-b border-[#d8dada] bg-[#eef0f0]">Text</button>
        <button className="flex-1">Arrange</button>
      </div>
      <div className={`${block} flex gap-px pt-[9px] pb-2`}>
        <Btn>To Front</Btn>
        <Btn>To Back</Btn>
      </div>
      <div className={`${block} pt-[7px] pb-[6px]`}>
        <div className="flex">
          <div className="flex flex-1 justify-between pr-[7px]">
            <Label>Size</Label>
            <button aria-label="Autosize" className="h-3 w-3">
              <svg viewBox="0 0 12 12" className="h-3 w-3" fill="none" stroke="#666"><path d="M1.500 1.500h9v9h-9Z" strokeDasharray="1 1" /><path d="M.5 1.500h2M9.500 1.500h2M.5 10.500h2M9.500 10.500h2" strokeWidth="2" /><path d="M3.500 4h2M7 4h2M8 3v2M4.500 7v2" stroke="#333" /></svg>
            </button>
          </div>
          <div className="flex gap-[5px]">
            <NumField label="Width" value="" caption />
            <NumField label="Height" value="40 pt" caption />
          </div>
        </div>
        <label className={`mt-px flex items-center justify-end gap-[3px] text-[8px] leading-[13px] text-[#555] ${small}`}>
          <input type="checkbox" className="h-2 w-2 appearance-none rounded-xs border border-[#888] bg-white" />
          Constrain Proportions
        </label>
      </div>
      <div className={`${block} flex justify-between pt-[6px] pb-[3px]`}>
        <Label>Position</Label>
        <div className="flex gap-[5px]">
          <NumField label="Left" value="" caption />
          <NumField label="Top" value="330 pt" caption />
        </div>
      </div>
      <div className={`${block} pt-[6px] pb-[5px]`}>
        <div className="mb-[3px] flex justify-between">
          <Label>Angle</Label>
          <NumField label="Angle" value="0°" />
        </div>
        <div className="flex"><Btn>Rotate shape only by 90°</Btn></div>
      </div>
      <div className={`${block} pt-[3px] pb-[6px]`}>
        <Label>Flip</Label>
        <div className="mt-[3px] flex gap-px">
          <Btn>Horizontal</Btn>
          <Btn>Vertical</Btn>
        </div>
      </div>
      <div className={`${block} pt-[2px] pb-[6px]`}>
        <Label>Align</Label>
        <div className="mt-[2px] flex justify-between">
          {alignIcons.map((a, i) => (
            <button key={a.name} aria-label={a.name} className={`flex h-[18px] w-[19px] items-center justify-center rounded-xs border border-[#bbb] bg-[#f0f0f0] ${i === 3 ? 'ml-1' : ''}`}>
              <svg viewBox="0 0 12 12" className="h-3 w-3" fill="none" stroke="#333">{a.art}</svg>
            </button>
          ))}
        </div>
        <div className="mt-px flex"><Btn>Snap to Grid</Btn></div>
      </div>
      <div className={`${block} pt-[2px] pb-[6px]`}>
        <Label>Distribute</Label>
        <div className="mt-[2px] flex gap-px">
          <Btn>Horizontal</Btn>
          <Btn>Vertical</Btn>
        </div>
      </div>
      <div className={`${block} flex pt-[6px] pb-1`}><Btn>Group</Btn></div>
    </aside>
  );
}

/* ---------- downloads ---------- */

const downloads = ['How and why w....mp4', 'mother-1851485....jpg', 'message.js', 'Energy Indepen....mp4', 'ts-node-example.zip', 'MICROURB FAR....mp4', '2022-02-14 (2).pdf'];

function Downloads() {
  return (
    <footer className={`flex h-[34px] shrink-0 items-center bg-[#2f2f33] pl-[2px] text-[8px] text-[#e8eaed] ${ui}`}>
      {downloads.map((name) => (
        <div key={name} className="flex h-[28px] w-[140px] items-center border-r border-[#4a4b50] pr-[9px] pl-[11px]">
          <svg viewBox="0 0 8 10" className="h-[10px] w-2">
            <path d="M.5 0h4.700L8 2.800V10H.5Z" fill="#e8eaed" />
            <path d="M2 4.500h4v3.500H2Z" fill="#5b6f86" />
          </svg>
          <a href="#" className="ml-2 flex-1 whitespace-nowrap">{name}</a>
          <button aria-label="Options"><ChevronUp className="h-2 w-2 text-[#c4c6ca]" /></button>
        </div>
      ))}
      <a href="#" className="ml-auto text-[#7ba4ee]">Show All</a>
      <button aria-label="Close downloads" className="mr-[7px] ml-[14px]"><X className="h-2 w-2" /></button>
    </footer>
  );
}

export default function App() {
  return (
    <div className="h-screen overflow-hidden bg-black px-16">
      <div className="flex h-full flex-col">
        <BrowserChrome />
        <Header />
        <Toolbar />
        <main className="flex min-h-0 flex-1">
          <Sidebar />
          <div className="flex w-[5px] shrink-0 items-center justify-center border-r border-[#e4e4e4] bg-[#fbfbfb]">
            <span className="h-1 w-[2px] bg-[#888]" />
          </div>
          <div className="flex min-w-0 flex-1 flex-col">
            <Canvas />
            <PageTabs />
          </div>
          <FormatPanel />
        </main>
        <Downloads />
      </div>
    </div>
  );
}
